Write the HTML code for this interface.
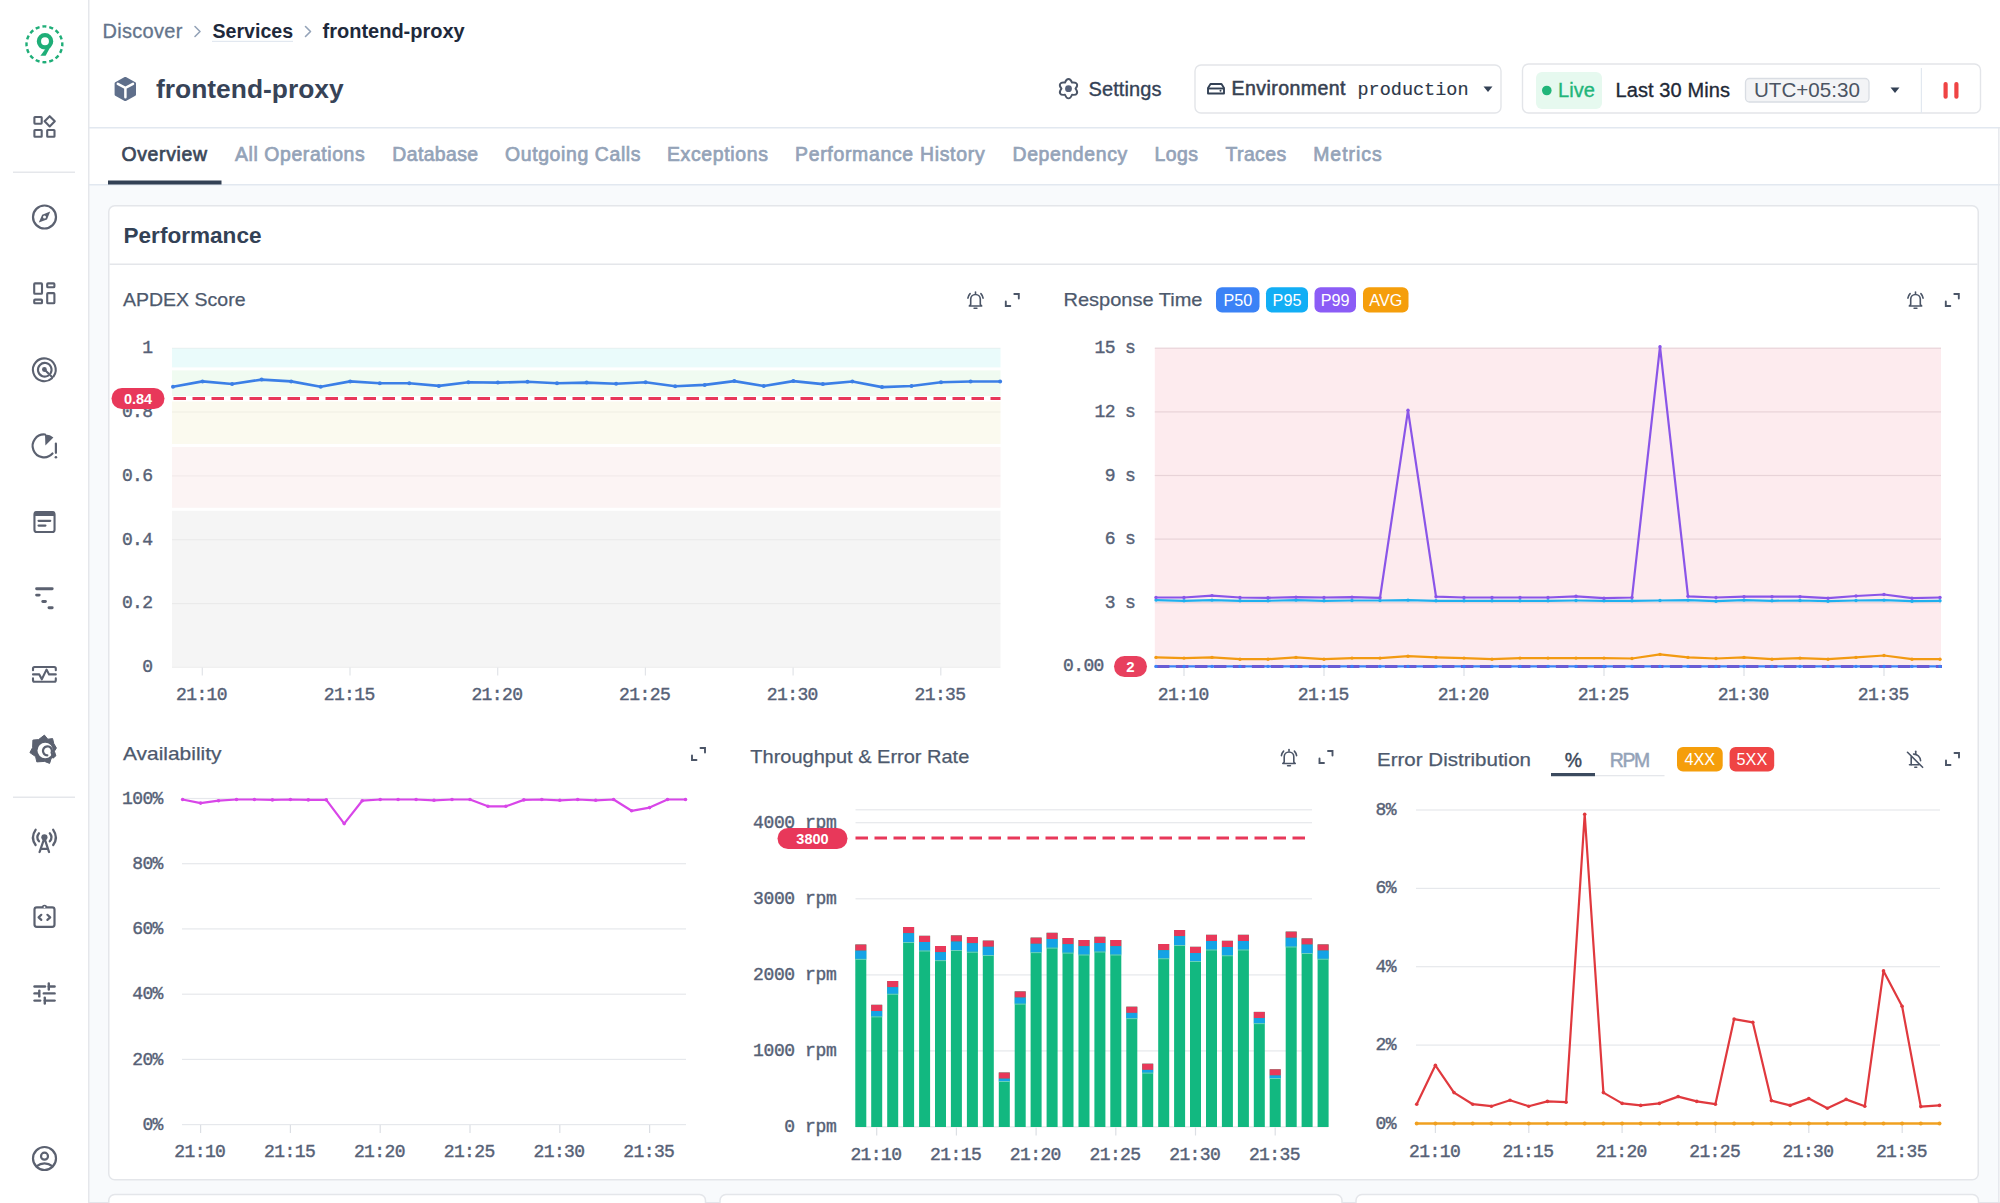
<!DOCTYPE html>
<html><head><meta charset="utf-8"><title>frontend-proxy</title>
<style>
html,body{margin:0;padding:0;width:2000px;height:1203px;overflow:hidden;background:#fff;font-family:"Liberation Sans",sans-serif;}
svg{position:absolute;left:0;top:0;display:block}
</style></head><body>
<svg width="2000" height="1203" viewBox="0 0 2000 1203">
<rect x="0" y="0" width="2000" height="1203" fill="#ffffff"/>
<rect x="89" y="185" width="1910" height="1018" fill="#f8fafc"/>
<rect x="88" y="0" width="1.5" height="1203" fill="#e5e7eb"/>
<rect x="89" y="127" width="1911" height="1.5" fill="#e2e8f0"/>
<rect x="89" y="184" width="1911" height="1.5" fill="#e2e8f0"/>
<rect x="1998.2" y="127" width="1.3" height="1076" fill="#e3e5ea"/>
<rect x="89" y="1202" width="1911" height="1" fill="#e3e5ea"/>
<rect x="13" y="171.5" width="62" height="1.5" fill="#e5e7eb"/>
<rect x="13" y="796.5" width="62" height="1.5" fill="#e5e7eb"/>
<circle cx="44.4" cy="44.3" r="17.9" fill="none" stroke="#1fae78" stroke-width="2.4" pathLength="16" stroke-dasharray="0.58 0.42" stroke-dashoffset="0.29"/>
<circle cx="45" cy="41.3" r="6.1" fill="none" stroke="#1fae78" stroke-width="4.3"/>
<path d="M49.4 43.5 L53.2 41.8 L45.6 55.7 L40.4 55.7 Z" fill="#1fae78"/>
<g fill="none" stroke="#5b6170" stroke-width="2.1" stroke-linejoin="round"><rect x="34.4" y="117" width="7.3" height="6.7" rx="0.6"/><rect x="34.4" y="130" width="7.3" height="6.8" rx="0.6"/><rect x="47.2" y="130" width="7.3" height="6.8" rx="0.6"/><path d="M49.7 116.2 L54.8 121.3 L49.7 126.4 L44.6 121.3 Z"/></g>
<circle cx="44.5" cy="217" r="11.5" fill="none" stroke="#5b6170" stroke-width="2.2"/>
<path d="M50.2 211.6 L47 219.5 L38.8 222.6 L42.2 214.8 Z" fill="#5b6170"/><circle cx="44.5" cy="217.1" r="1.5" fill="#fff"/>
<g fill="none" stroke="#5b6170" stroke-width="2.1" stroke-linejoin="round"><rect x="34.2" y="283.4" width="7.8" height="10.4" rx="0.8"/><rect x="47.2" y="283.4" width="7.2" height="3.9" rx="0.8"/><rect x="34.2" y="299.6" width="7.8" height="3.7" rx="0.8"/><rect x="47.2" y="293.1" width="7.2" height="10.2" rx="0.8"/></g>
<g fill="none" stroke="#5b6170" stroke-width="2.1" stroke-linecap="round"><path d="M52 378.2 A 11.4 11.4 0 1 1 53.6 376.4"/><path d="M48.2 375.6 A 6.8 6.8 0 1 1 50.6 373.2"/><path d="M44.4 369.5 L52.3 377.2"/></g><circle cx="44.4" cy="369.5" r="2.4" fill="#5b6170"/>
<g fill="none" stroke="#5b6170" stroke-width="2.2" stroke-linecap="round"><path d="M52.5 453.5 A 11.4 11.4 0 1 1 45 434.5"/><path d="M55.9 443.6 V452.8"/></g><path d="M45 434.4 A 11.4 11.4 0 0 1 53.4 437.4 L45.4 445.4 Z" fill="#5b6170"/><circle cx="55.9" cy="457.3" r="1.3" fill="#5b6170"/>
<rect x="34.45" y="512.15" width="20.1" height="19.8" rx="2.3" fill="none" stroke="#5b6170" stroke-width="2.1"/><rect x="34" y="511.6" width="21" height="4.4" rx="1.5" fill="#5b6170"/><path d="M38.6 520.8 H50.2 M38.6 525.6 H45.4" stroke="#5b6170" stroke-width="2.3" stroke-linecap="round"/>
<g stroke="#5b6170" stroke-width="2.9" stroke-linecap="round"><path d="M36.6 588.8 H52.2"/><path d="M36.6 595.1 H39.2"/><path d="M42.8 601.5 H45.4"/><path d="M49 607.7 H52.2"/></g>
<g fill="none" stroke="#5b6170" stroke-width="2.1" stroke-linecap="round" stroke-linejoin="round"><path d="M33 670.2 V668.5 Q33 667 34.5 667 H54.3 Q55.8 667 55.8 668.5 V670.2"/><path d="M33 678.4 V680.2 Q33 681.7 34.5 681.7 H54.3 Q55.8 681.7 55.8 680.2 V678.4"/><path d="M33 674.4 H39.3 L41.8 679.3 L46.5 669.6 L49.1 674.4 H55.8"/></g>
<path d="M44.4 735.1 L47.8 739.2 L52.6 738.6 L53.8 743.6 L56.4 748 L54.4 751.2 L55.9 755.9 L51.2 758.4 L49.6 763.4 L44.6 761.4 L36.8 761.9 L35.6 756.6 L29.9 752.6 L32.6 747.6 L32.9 740.1 L38.6 739.6 Z" fill="#5b6170" stroke="#5b6170" stroke-width="1" stroke-linejoin="round"/><circle cx="45.2" cy="750.5" r="7.7" fill="#fff"/><path d="M47.3 755.3 A 4.5 4.5 0 1 1 51.6 752.6 L53.4 757.2" fill="none" stroke="#5b6170" stroke-width="2.3" stroke-linecap="round" stroke-linejoin="round"/>
<g fill="none" stroke="#5b6170" stroke-width="2.3" stroke-linecap="round" stroke-linejoin="round"><path d="M35.6 829.8 Q30.2 837.5 35.6 845"/><path d="M53.2 829.8 Q58.6 837.5 53.2 845"/><path d="M39 833.3 Q35.6 837.4 39 841.3"/><path d="M49.8 833.3 Q53.2 837.4 49.8 841.3"/><path d="M39.6 852 L44.4 838 L49 852"/><path d="M41.1 848.8 H47.6"/></g><circle cx="44.4" cy="837.3" r="3.1" fill="#5b6170"/>
<g fill="none" stroke="#5b6170" stroke-width="2.2" stroke-linecap="round" stroke-linejoin="round"><rect x="34.5" y="907.3" width="20" height="19.6" rx="2.3"/><path d="M41.3 914.8 L38.6 917.4 L41.3 919.9"/><path d="M47.4 914.8 L50.2 917.4 L47.4 919.9"/></g><path d="M41.8 907.4 A 2.7 2.7 0 0 1 47.2 907.4 Z" fill="#5b6170"/><circle cx="44.5" cy="907.2" r="0.9" fill="#fff"/>
<g stroke="#5b6170" stroke-width="2.4" stroke-linecap="round"><path d="M34.5 986.5 H45"/><path d="M48.8 986.5 H54.6"/><path d="M48.8 983.4 V989.6"/><path d="M34.5 993.4 H38.8"/><path d="M43.8 993.4 H54.6"/><path d="M39.3 990.6 V996.4"/><path d="M34.5 1000.6 H40.2"/><path d="M44.8 1000.6 H54.6"/><path d="M44.8 997.6 V1003.6"/></g>
<g fill="none" stroke="#5b6170" stroke-width="2.2"><circle cx="44.5" cy="1158.5" r="11.5"/><circle cx="44.5" cy="1156.2" r="3.5"/><path d="M36.3 1166.4 Q44.5 1160.2 52.7 1166.4"/></g>
<text x="102.5" y="38" font-family="Liberation Sans" font-size="20" font-weight="400" fill="#64748b" stroke="#64748b" stroke-width="0.3" text-anchor="start" letter-spacing="0.3" >Discover</text>
<path d="M195 26.5 L200 31.5 L195 36.5" fill="none" stroke="#94a3b8" stroke-width="1.6" stroke-linecap="round" stroke-linejoin="round"/>
<text x="212.5" y="38" font-family="Liberation Sans" font-size="19.6" font-weight="700" fill="#1e293b" text-anchor="start" >Services</text>
<rect x="212" y="40.8" width="81" height="1.2" fill="#e2e8f0"/>
<path d="M305.5 26.5 L310.5 31.5 L305.5 36.5" fill="none" stroke="#94a3b8" stroke-width="1.6" stroke-linecap="round" stroke-linejoin="round"/>
<text x="322.5" y="38" font-family="Liberation Sans" font-size="20" font-weight="700" fill="#1e293b" text-anchor="start" >frontend-proxy</text>
<path d="M125.3 78.2 L134.7 83.4 L134.7 94.6 L125.3 99.8 L115.9 94.6 L115.9 83.4 Z" fill="#5f6f8b" stroke="#5f6f8b" stroke-width="2.6" stroke-linejoin="round"/><path d="M117.8 83.9 L125.4 87.9 L133 83.9 M125.4 87.9 V97.3" fill="none" stroke="#fff" stroke-width="2.5" stroke-linejoin="round" stroke-linecap="round"/>
<text x="156" y="97.5" font-family="Liberation Sans" font-size="26.4" font-weight="700" fill="#374357" text-anchor="start" >frontend-proxy</text>
<g transform="translate(1068.5 88.7)"><path d="M-3.50 -6.06 C-1.72 -10.86 1.72 -10.86 3.50 -6.06 C8.55 -6.92 10.27 -3.94 7.00 0.00 C10.27 3.94 8.55 6.92 3.50 6.06 C1.72 10.86 -1.72 10.86 -3.50 6.06 C-8.55 6.92 -10.27 3.94 -7.00 0.00 C-10.27 -3.94 -8.55 -6.92 -3.50 -6.06 Z" fill="none" stroke="#4b5567" stroke-width="1.9" stroke-linejoin="round"/><circle cx="0" cy="0" r="3.4" fill="#566179"/></g>
<text x="1088.5" y="95.5" font-family="Liberation Sans" font-size="20" font-weight="400" fill="#334155" stroke="#334155" stroke-width="0.35" text-anchor="start" letter-spacing="0.1" >Settings</text>
<rect x="1195" y="65" width="306" height="48" rx="6" fill="#fff" stroke="#e3e5e9" stroke-width="1.4"/>
<g fill="none" stroke="#334155" stroke-width="1.9" stroke-linejoin="round"><path d="M1208 93.5 V88 L1210.5 84 H1221.5 L1224 88 V93.5 Z"/><path d="M1208 88.5 H1224"/></g><circle cx="1220.5" cy="90.8" r="1" fill="#334155"/>
<text x="1231.5" y="94.8" font-family="Liberation Sans" font-size="19.5" fill="#374151" stroke="#374151" stroke-width="0.55" textLength="114" lengthAdjust="spacing">Environment</text>
<text x="1357.5" y="94.8" font-family="Liberation Mono" font-size="18.5" font-weight="400" fill="#2d3748" stroke="#2d3748" stroke-width="0.15" text-anchor="start" >production</text>
<path d="M1483.5 86.5 H1492.5 L1488 92 Z" fill="#334155"/>
<rect x="1522.5" y="64" width="458" height="49" rx="6" fill="#fff" stroke="#e3e5e9" stroke-width="1.4"/>
<rect x="1536" y="72" width="66" height="37" rx="6" fill="#e6f9ef"/>
<circle cx="1546.8" cy="90.5" r="4.8" fill="#21b57a"/>
<text x="1558" y="97" font-family="Liberation Sans" font-size="20" font-weight="400" fill="#21b57a" stroke="#21b57a" stroke-width="0.35" text-anchor="start" letter-spacing="0.1" >Live</text>
<text x="1615.5" y="97" font-family="Liberation Sans" font-size="20" font-weight="400" fill="#1f2937" stroke="#1f2937" stroke-width="0.35" text-anchor="start" letter-spacing="0.1" >Last 30 Mins</text>
<rect x="1745.5" y="78.5" width="123.5" height="23.5" rx="4" fill="#f3f4f6" stroke="#d9dde3" stroke-width="1.3"/>
<text x="1754" y="97" font-family="Liberation Sans" font-size="20.6" font-weight="400" fill="#4b5563" text-anchor="start" >UTC+05:30</text>
<path d="M1890.5 87.5 H1899.5 L1895 93 Z" fill="#334155"/>
<rect x="1920.8" y="68" width="1.2" height="45" fill="#e2e8f0"/>
<rect x="1943.5" y="82" width="4.2" height="16.8" rx="2" fill="#ef4444"/><rect x="1954.3" y="82" width="4.2" height="16.8" rx="2" fill="#ef4444"/>
<text x="121.5" y="160.7" font-family="Liberation Sans" font-size="19.4" font-weight="400" fill="#3b4859" stroke="#3b4859" stroke-width="0.7" textLength="85.4" lengthAdjust="spacing">Overview</text>
<text x="235" y="160.7" font-family="Liberation Sans" font-size="19.4" font-weight="400" fill="#94a3b8" stroke="#94a3b8" stroke-width="0.7" textLength="129.7" lengthAdjust="spacing">All Operations</text>
<text x="392.3" y="160.7" font-family="Liberation Sans" font-size="19.4" font-weight="400" fill="#94a3b8" stroke="#94a3b8" stroke-width="0.7" textLength="85.8" lengthAdjust="spacing">Database</text>
<text x="505" y="160.7" font-family="Liberation Sans" font-size="19.4" font-weight="400" fill="#94a3b8" stroke="#94a3b8" stroke-width="0.7" textLength="135.5" lengthAdjust="spacing">Outgoing Calls</text>
<text x="667" y="160.7" font-family="Liberation Sans" font-size="19.4" font-weight="400" fill="#94a3b8" stroke="#94a3b8" stroke-width="0.7" textLength="100.9" lengthAdjust="spacing">Exceptions</text>
<text x="795" y="160.7" font-family="Liberation Sans" font-size="19.4" font-weight="400" fill="#94a3b8" stroke="#94a3b8" stroke-width="0.7" textLength="189.6" lengthAdjust="spacing">Performance History</text>
<text x="1012.5" y="160.7" font-family="Liberation Sans" font-size="19.4" font-weight="400" fill="#94a3b8" stroke="#94a3b8" stroke-width="0.7" textLength="114.7" lengthAdjust="spacing">Dependency</text>
<text x="1154.5" y="160.7" font-family="Liberation Sans" font-size="19.4" font-weight="400" fill="#94a3b8" stroke="#94a3b8" stroke-width="0.7" textLength="43.4" lengthAdjust="spacing">Logs</text>
<text x="1225.4" y="160.7" font-family="Liberation Sans" font-size="19.4" font-weight="400" fill="#94a3b8" stroke="#94a3b8" stroke-width="0.7" textLength="60.8" lengthAdjust="spacing">Traces</text>
<text x="1313.2" y="160.7" font-family="Liberation Sans" font-size="19.4" font-weight="400" fill="#94a3b8" stroke="#94a3b8" stroke-width="0.7" textLength="68.5" lengthAdjust="spacing">Metrics</text>
<rect x="108" y="180.5" width="113.5" height="4" fill="#334155"/>
<rect x="108.75" y="205.75" width="1869.5" height="974" rx="6" fill="#ffffff" stroke="#e4e6ea" stroke-width="1.5"/>
<rect x="109.5" y="263.5" width="1868" height="1.5" fill="#e4e6ea"/>
<text x="123.5" y="243" font-family="Liberation Sans" font-size="22.4" font-weight="700" fill="#334155" textLength="138" lengthAdjust="spacingAndGlyphs">Performance</text>
<rect x="108.75" y="1194.5" width="596.75" height="40" rx="6" fill="#ffffff" stroke="#e4e6ea" stroke-width="1.5"/>
<rect x="720" y="1194.5" width="622" height="40" rx="6" fill="#ffffff" stroke="#e4e6ea" stroke-width="1.5"/>
<rect x="1356" y="1194.5" width="622.5" height="40" rx="6" fill="#ffffff" stroke="#e4e6ea" stroke-width="1.5"/>
<text x="123" y="306.3" font-family="Liberation Sans" font-size="19" font-weight="400" fill="#4d596d" stroke="#4d596d" stroke-width="0.25" textLength="122.5" lengthAdjust="spacingAndGlyphs">APDEX Score</text>
<g transform="translate(966.5 291)" fill="none" stroke="#4b5567" stroke-width="1.6" stroke-linecap="round" stroke-linejoin="round"><path d="M4.2 13.5 V8.3 A4.8 4.8 0 0 1 13.8 8.3 V13.5 L15.2 15 H2.8 Z"/><path d="M9 1 V2.6"/><path d="M7.6 17.2 H10.4"/><path d="M1.4 7.2 A8 8 0 0 1 3.6 2.6"/><path d="M16.6 7.2 A8 8 0 0 0 14.4 2.6"/></g>
<g transform="translate(1004.8 293)" fill="none" stroke="#4b5567" stroke-width="1.9" stroke-linecap="round"><path d="M9.5 1 H14 V5.5"/><path d="M1 8.5 V13 H5.5"/></g>
<rect x="172" y="348.2" width="828.5" height="19.2" fill="#eafbfb"/>
<rect x="172" y="370.4" width="828.5" height="25.7" fill="#f0fbf1"/>
<rect x="172" y="401.5" width="828.5" height="42.5" fill="#fbfaef"/>
<rect x="172" y="447.0" width="828.5" height="60.8" fill="#fcf4f4"/>
<rect x="172" y="510.8" width="828.5" height="156.6" fill="#f5f5f5"/>
<rect x="172" y="347.6" width="828.5" height="1.2" fill="#000" fill-opacity="0.045"/>
<rect x="172" y="411.4" width="828.5" height="1.2" fill="#000" fill-opacity="0.045"/>
<rect x="172" y="475.3" width="828.5" height="1.2" fill="#000" fill-opacity="0.045"/>
<rect x="172" y="539.1" width="828.5" height="1.2" fill="#000" fill-opacity="0.045"/>
<rect x="172" y="603.0" width="828.5" height="1.2" fill="#000" fill-opacity="0.045"/>
<rect x="172" y="666.8" width="828.5" height="1.2" fill="#000" fill-opacity="0.045"/>
<text x="152.5" y="353.0" font-family="Liberation Mono" font-size="18" font-weight="400" fill="#566176" stroke="#566176" stroke-width="0.4" text-anchor="end" letter-spacing="-0.6" >1</text>
<text x="152.5" y="416.8" font-family="Liberation Mono" font-size="18" font-weight="400" fill="#566176" stroke="#566176" stroke-width="0.4" text-anchor="end" letter-spacing="-0.6" >0.8</text>
<text x="152.5" y="480.7" font-family="Liberation Mono" font-size="18" font-weight="400" fill="#566176" stroke="#566176" stroke-width="0.4" text-anchor="end" letter-spacing="-0.6" >0.6</text>
<text x="152.5" y="544.5" font-family="Liberation Mono" font-size="18" font-weight="400" fill="#566176" stroke="#566176" stroke-width="0.4" text-anchor="end" letter-spacing="-0.6" >0.4</text>
<text x="152.5" y="608.4" font-family="Liberation Mono" font-size="18" font-weight="400" fill="#566176" stroke="#566176" stroke-width="0.4" text-anchor="end" letter-spacing="-0.6" >0.2</text>
<text x="152.5" y="672.2" font-family="Liberation Mono" font-size="18" font-weight="400" fill="#566176" stroke="#566176" stroke-width="0.4" text-anchor="end" letter-spacing="-0.6" >0</text>
<rect x="201.7" y="667.5" width="1.2" height="8" fill="#e2e4e8"/>
<text x="201.5" y="700.3" font-family="Liberation Mono" font-size="18" font-weight="400" fill="#566176" stroke="#566176" stroke-width="0.4" text-anchor="middle" letter-spacing="-0.6" >21:10</text>
<rect x="349.4" y="667.5" width="1.2" height="8" fill="#e2e4e8"/>
<text x="349.2" y="700.3" font-family="Liberation Mono" font-size="18" font-weight="400" fill="#566176" stroke="#566176" stroke-width="0.4" text-anchor="middle" letter-spacing="-0.6" >21:15</text>
<rect x="497.1" y="667.5" width="1.2" height="8" fill="#e2e4e8"/>
<text x="496.9" y="700.3" font-family="Liberation Mono" font-size="18" font-weight="400" fill="#566176" stroke="#566176" stroke-width="0.4" text-anchor="middle" letter-spacing="-0.6" >21:20</text>
<rect x="644.8" y="667.5" width="1.2" height="8" fill="#e2e4e8"/>
<text x="644.6" y="700.3" font-family="Liberation Mono" font-size="18" font-weight="400" fill="#566176" stroke="#566176" stroke-width="0.4" text-anchor="middle" letter-spacing="-0.6" >21:25</text>
<rect x="792.5" y="667.5" width="1.2" height="8" fill="#e2e4e8"/>
<text x="792.3" y="700.3" font-family="Liberation Mono" font-size="18" font-weight="400" fill="#566176" stroke="#566176" stroke-width="0.4" text-anchor="middle" letter-spacing="-0.6" >21:30</text>
<rect x="940.2" y="667.5" width="1.2" height="8" fill="#e2e4e8"/>
<text x="940.0" y="700.3" font-family="Liberation Mono" font-size="18" font-weight="400" fill="#566176" stroke="#566176" stroke-width="0.4" text-anchor="middle" letter-spacing="-0.6" >21:35</text>
<polyline points="173.0,386.7 202.5,381.4 232.1,384.0 261.6,379.6 291.2,381.4 320.7,386.7 350.2,381.4 379.8,383.3 409.3,383.3 438.9,385.9 468.4,382.2 497.9,382.6 527.5,381.8 557.0,383.3 586.6,382.6 616.1,383.7 645.6,382.2 675.2,386.3 704.7,384.9 734.3,381.1 763.8,386.0 793.3,381.1 822.9,384.1 852.4,381.5 882.0,387.1 911.5,386.0 941.0,382.2 970.6,381.5 1000.1,381.5" fill="none" stroke="#3b7fe6" stroke-width="2.6" stroke-linejoin="round"/>
<circle cx="173.0" cy="386.7" r="2" fill="#3b7fe6"/>
<circle cx="202.5" cy="381.4" r="2" fill="#3b7fe6"/>
<circle cx="232.1" cy="384.0" r="2" fill="#3b7fe6"/>
<circle cx="261.6" cy="379.6" r="2" fill="#3b7fe6"/>
<circle cx="291.2" cy="381.4" r="2" fill="#3b7fe6"/>
<circle cx="320.7" cy="386.7" r="2" fill="#3b7fe6"/>
<circle cx="350.2" cy="381.4" r="2" fill="#3b7fe6"/>
<circle cx="379.8" cy="383.3" r="2" fill="#3b7fe6"/>
<circle cx="409.3" cy="383.3" r="2" fill="#3b7fe6"/>
<circle cx="438.9" cy="385.9" r="2" fill="#3b7fe6"/>
<circle cx="468.4" cy="382.2" r="2" fill="#3b7fe6"/>
<circle cx="497.9" cy="382.6" r="2" fill="#3b7fe6"/>
<circle cx="527.5" cy="381.8" r="2" fill="#3b7fe6"/>
<circle cx="557.0" cy="383.3" r="2" fill="#3b7fe6"/>
<circle cx="586.6" cy="382.6" r="2" fill="#3b7fe6"/>
<circle cx="616.1" cy="383.7" r="2" fill="#3b7fe6"/>
<circle cx="645.6" cy="382.2" r="2" fill="#3b7fe6"/>
<circle cx="675.2" cy="386.3" r="2" fill="#3b7fe6"/>
<circle cx="704.7" cy="384.9" r="2" fill="#3b7fe6"/>
<circle cx="734.3" cy="381.1" r="2" fill="#3b7fe6"/>
<circle cx="763.8" cy="386.0" r="2" fill="#3b7fe6"/>
<circle cx="793.3" cy="381.1" r="2" fill="#3b7fe6"/>
<circle cx="822.9" cy="384.1" r="2" fill="#3b7fe6"/>
<circle cx="852.4" cy="381.5" r="2" fill="#3b7fe6"/>
<circle cx="882.0" cy="387.1" r="2" fill="#3b7fe6"/>
<circle cx="911.5" cy="386.0" r="2" fill="#3b7fe6"/>
<circle cx="941.0" cy="382.2" r="2" fill="#3b7fe6"/>
<circle cx="970.6" cy="381.5" r="2" fill="#3b7fe6"/>
<circle cx="1000.1" cy="381.5" r="2" fill="#3b7fe6"/>
<line x1="172" y1="398.4" x2="1000.5" y2="398.4" stroke="#e8385a" stroke-width="3" stroke-dasharray="12.5 6.5" stroke-dashoffset="-1.5"/>
<rect x="111.5" y="388" width="53" height="21" rx="10.5" fill="#e8385a"/>
<text x="138" y="403.5" font-family="Liberation Sans" font-size="14.5" font-weight="700" fill="#ffffff" text-anchor="middle" >0.84</text>
<text x="1063.5" y="306" font-family="Liberation Sans" font-size="19" font-weight="400" fill="#4d596d" stroke="#4d596d" stroke-width="0.25" textLength="139" lengthAdjust="spacingAndGlyphs">Response Time</text>
<rect x="1216" y="287.3" width="43.5" height="25.2" rx="6" fill="#3b82f6"/>
<text x="1237.8" y="305.8" font-family="Liberation Sans" font-size="16.2" fill="#fff" text-anchor="middle">P50</text>
<rect x="1266" y="287.3" width="42" height="25.2" rx="6" fill="#12aef5"/>
<text x="1287.0" y="305.8" font-family="Liberation Sans" font-size="16.2" fill="#fff" text-anchor="middle">P95</text>
<rect x="1314.5" y="287.3" width="41.5" height="25.2" rx="6" fill="#8b5cf6"/>
<text x="1335.2" y="305.8" font-family="Liberation Sans" font-size="16.2" fill="#fff" text-anchor="middle">P99</text>
<rect x="1363" y="287.3" width="45.5" height="25.2" rx="6" fill="#f59e0b"/>
<text x="1385.8" y="305.8" font-family="Liberation Sans" font-size="16.2" fill="#fff" text-anchor="middle">AVG</text>
<g transform="translate(1906.5 291)" fill="none" stroke="#4b5567" stroke-width="1.6" stroke-linecap="round" stroke-linejoin="round"><path d="M4.2 13.5 V8.3 A4.8 4.8 0 0 1 13.8 8.3 V13.5 L15.2 15 H2.8 Z"/><path d="M9 1 V2.6"/><path d="M7.6 17.2 H10.4"/><path d="M1.4 7.2 A8 8 0 0 1 3.6 2.6"/><path d="M16.6 7.2 A8 8 0 0 0 14.4 2.6"/></g>
<g transform="translate(1944.8 293)" fill="none" stroke="#4b5567" stroke-width="1.9" stroke-linecap="round"><path d="M9.5 1 H14 V5.5"/><path d="M1 8.5 V13 H5.5"/></g>
<rect x="1154.8" y="348.2" width="786.2" height="318.2" fill="#fdebee"/>
<rect x="1154.8" y="347.6" width="786.2" height="1.2" fill="#e8d3d8"/>
<rect x="1154.8" y="411.3" width="786.2" height="1.2" fill="#e8d3d8"/>
<rect x="1154.8" y="474.9" width="786.2" height="1.2" fill="#e8d3d8"/>
<rect x="1154.8" y="538.5" width="786.2" height="1.2" fill="#e8d3d8"/>
<rect x="1154.8" y="602.2" width="786.2" height="1.2" fill="#e8d3d8"/>
<text x="1135.3" y="353.2" font-family="Liberation Mono" font-size="18" font-weight="400" fill="#566176" stroke="#566176" stroke-width="0.4" text-anchor="end" letter-spacing="-0.6" >15 s</text>
<text x="1135.3" y="416.9" font-family="Liberation Mono" font-size="18" font-weight="400" fill="#566176" stroke="#566176" stroke-width="0.4" text-anchor="end" letter-spacing="-0.6" >12 s</text>
<text x="1135.3" y="480.5" font-family="Liberation Mono" font-size="18" font-weight="400" fill="#566176" stroke="#566176" stroke-width="0.4" text-anchor="end" letter-spacing="-0.6" >9 s</text>
<text x="1135.3" y="544.1" font-family="Liberation Mono" font-size="18" font-weight="400" fill="#566176" stroke="#566176" stroke-width="0.4" text-anchor="end" letter-spacing="-0.6" >6 s</text>
<text x="1135.3" y="607.8" font-family="Liberation Mono" font-size="18" font-weight="400" fill="#566176" stroke="#566176" stroke-width="0.4" text-anchor="end" letter-spacing="-0.6" >3 s</text>
<text x="1103.8" y="671.4" font-family="Liberation Mono" font-size="18" font-weight="400" fill="#566176" stroke="#566176" stroke-width="0.4" text-anchor="end" letter-spacing="-0.6" >0.00</text>
<rect x="1183.4" y="667" width="1.2" height="9" fill="#dcdfe4"/>
<text x="1183.2" y="700" font-family="Liberation Mono" font-size="18" font-weight="400" fill="#566176" stroke="#566176" stroke-width="0.4" text-anchor="middle" letter-spacing="-0.6" >21:10</text>
<rect x="1323.4" y="667" width="1.2" height="9" fill="#dcdfe4"/>
<text x="1323.2" y="700" font-family="Liberation Mono" font-size="18" font-weight="400" fill="#566176" stroke="#566176" stroke-width="0.4" text-anchor="middle" letter-spacing="-0.6" >21:15</text>
<rect x="1463.4" y="667" width="1.2" height="9" fill="#dcdfe4"/>
<text x="1463.2" y="700" font-family="Liberation Mono" font-size="18" font-weight="400" fill="#566176" stroke="#566176" stroke-width="0.4" text-anchor="middle" letter-spacing="-0.6" >21:20</text>
<rect x="1603.4" y="667" width="1.2" height="9" fill="#dcdfe4"/>
<text x="1603.2" y="700" font-family="Liberation Mono" font-size="18" font-weight="400" fill="#566176" stroke="#566176" stroke-width="0.4" text-anchor="middle" letter-spacing="-0.6" >21:25</text>
<rect x="1743.4" y="667" width="1.2" height="9" fill="#dcdfe4"/>
<text x="1743.2" y="700" font-family="Liberation Mono" font-size="18" font-weight="400" fill="#566176" stroke="#566176" stroke-width="0.4" text-anchor="middle" letter-spacing="-0.6" >21:30</text>
<rect x="1883.4" y="667" width="1.2" height="9" fill="#dcdfe4"/>
<text x="1883.2" y="700" font-family="Liberation Mono" font-size="18" font-weight="400" fill="#566176" stroke="#566176" stroke-width="0.4" text-anchor="middle" letter-spacing="-0.6" >21:35</text>
<polyline points="1156.0,657.4 1184.0,658.1 1212.0,657.4 1240.0,659.2 1268.0,659.2 1296.0,657.4 1324.0,659.2 1352.0,658.1 1380.0,658.1 1408.0,656.2 1436.0,657.4 1464.0,658.1 1492.0,659.2 1520.0,658.1 1548.0,658.1 1576.0,658.1 1604.0,658.1 1632.0,658.5 1660.0,654.4 1688.0,657.4 1716.0,658.5 1744.0,657.4 1772.0,659.2 1800.0,658.1 1828.0,659.2 1856.0,657.4 1884.0,655.5 1912.0,659.2 1940.0,659.2" fill="none" stroke="#f29a12" stroke-width="2.2" stroke-linejoin="round"/>
<circle cx="1156.0" cy="657.4" r="1.7" fill="#f29a12"/>
<circle cx="1184.0" cy="658.1" r="1.7" fill="#f29a12"/>
<circle cx="1212.0" cy="657.4" r="1.7" fill="#f29a12"/>
<circle cx="1240.0" cy="659.2" r="1.7" fill="#f29a12"/>
<circle cx="1268.0" cy="659.2" r="1.7" fill="#f29a12"/>
<circle cx="1296.0" cy="657.4" r="1.7" fill="#f29a12"/>
<circle cx="1324.0" cy="659.2" r="1.7" fill="#f29a12"/>
<circle cx="1352.0" cy="658.1" r="1.7" fill="#f29a12"/>
<circle cx="1380.0" cy="658.1" r="1.7" fill="#f29a12"/>
<circle cx="1408.0" cy="656.2" r="1.7" fill="#f29a12"/>
<circle cx="1436.0" cy="657.4" r="1.7" fill="#f29a12"/>
<circle cx="1464.0" cy="658.1" r="1.7" fill="#f29a12"/>
<circle cx="1492.0" cy="659.2" r="1.7" fill="#f29a12"/>
<circle cx="1520.0" cy="658.1" r="1.7" fill="#f29a12"/>
<circle cx="1548.0" cy="658.1" r="1.7" fill="#f29a12"/>
<circle cx="1576.0" cy="658.1" r="1.7" fill="#f29a12"/>
<circle cx="1604.0" cy="658.1" r="1.7" fill="#f29a12"/>
<circle cx="1632.0" cy="658.5" r="1.7" fill="#f29a12"/>
<circle cx="1660.0" cy="654.4" r="1.7" fill="#f29a12"/>
<circle cx="1688.0" cy="657.4" r="1.7" fill="#f29a12"/>
<circle cx="1716.0" cy="658.5" r="1.7" fill="#f29a12"/>
<circle cx="1744.0" cy="657.4" r="1.7" fill="#f29a12"/>
<circle cx="1772.0" cy="659.2" r="1.7" fill="#f29a12"/>
<circle cx="1800.0" cy="658.1" r="1.7" fill="#f29a12"/>
<circle cx="1828.0" cy="659.2" r="1.7" fill="#f29a12"/>
<circle cx="1856.0" cy="657.4" r="1.7" fill="#f29a12"/>
<circle cx="1884.0" cy="655.5" r="1.7" fill="#f29a12"/>
<circle cx="1912.0" cy="659.2" r="1.7" fill="#f29a12"/>
<circle cx="1940.0" cy="659.2" r="1.7" fill="#f29a12"/>
<polyline points="1156.0,600.1 1184.0,600.8 1212.0,600.1 1240.0,600.8 1268.0,600.8 1296.0,600.1 1324.0,600.8 1352.0,600.5 1380.0,600.5 1408.0,600.1 1436.0,600.8 1464.0,600.8 1492.0,600.8 1520.0,600.8 1548.0,600.8 1576.0,600.5 1604.0,600.8 1632.0,600.8 1660.0,600.5 1688.0,600.1 1716.0,601.2 1744.0,600.1 1772.0,600.8 1800.0,600.5 1828.0,601.2 1856.0,600.5 1884.0,600.1 1912.0,601.2 1940.0,600.8" fill="none" stroke="#1eb0ee" stroke-width="2.2" stroke-linejoin="round"/>
<circle cx="1156.0" cy="600.1" r="1.7" fill="#1eb0ee"/>
<circle cx="1184.0" cy="600.8" r="1.7" fill="#1eb0ee"/>
<circle cx="1212.0" cy="600.1" r="1.7" fill="#1eb0ee"/>
<circle cx="1240.0" cy="600.8" r="1.7" fill="#1eb0ee"/>
<circle cx="1268.0" cy="600.8" r="1.7" fill="#1eb0ee"/>
<circle cx="1296.0" cy="600.1" r="1.7" fill="#1eb0ee"/>
<circle cx="1324.0" cy="600.8" r="1.7" fill="#1eb0ee"/>
<circle cx="1352.0" cy="600.5" r="1.7" fill="#1eb0ee"/>
<circle cx="1380.0" cy="600.5" r="1.7" fill="#1eb0ee"/>
<circle cx="1408.0" cy="600.1" r="1.7" fill="#1eb0ee"/>
<circle cx="1436.0" cy="600.8" r="1.7" fill="#1eb0ee"/>
<circle cx="1464.0" cy="600.8" r="1.7" fill="#1eb0ee"/>
<circle cx="1492.0" cy="600.8" r="1.7" fill="#1eb0ee"/>
<circle cx="1520.0" cy="600.8" r="1.7" fill="#1eb0ee"/>
<circle cx="1548.0" cy="600.8" r="1.7" fill="#1eb0ee"/>
<circle cx="1576.0" cy="600.5" r="1.7" fill="#1eb0ee"/>
<circle cx="1604.0" cy="600.8" r="1.7" fill="#1eb0ee"/>
<circle cx="1632.0" cy="600.8" r="1.7" fill="#1eb0ee"/>
<circle cx="1660.0" cy="600.5" r="1.7" fill="#1eb0ee"/>
<circle cx="1688.0" cy="600.1" r="1.7" fill="#1eb0ee"/>
<circle cx="1716.0" cy="601.2" r="1.7" fill="#1eb0ee"/>
<circle cx="1744.0" cy="600.1" r="1.7" fill="#1eb0ee"/>
<circle cx="1772.0" cy="600.8" r="1.7" fill="#1eb0ee"/>
<circle cx="1800.0" cy="600.5" r="1.7" fill="#1eb0ee"/>
<circle cx="1828.0" cy="601.2" r="1.7" fill="#1eb0ee"/>
<circle cx="1856.0" cy="600.5" r="1.7" fill="#1eb0ee"/>
<circle cx="1884.0" cy="600.1" r="1.7" fill="#1eb0ee"/>
<circle cx="1912.0" cy="601.2" r="1.7" fill="#1eb0ee"/>
<circle cx="1940.0" cy="600.8" r="1.7" fill="#1eb0ee"/>
<polyline points="1156.0,597.5 1184.0,597.5 1212.0,595.6 1240.0,597.5 1268.0,597.8 1296.0,597.1 1324.0,597.5 1352.0,597.1 1380.0,597.8 1408.0,410.3 1436.0,596.7 1464.0,597.5 1492.0,597.5 1520.0,597.5 1548.0,597.5 1576.0,596.3 1604.0,598.2 1632.0,597.5 1660.0,346.7 1688.0,596.3 1716.0,597.5 1744.0,596.7 1772.0,596.7 1800.0,596.7 1828.0,598.2 1856.0,596.0 1884.0,594.5 1912.0,598.2 1940.0,597.5" fill="none" stroke="#8a55e8" stroke-width="2.2" stroke-linejoin="round"/>
<circle cx="1156.0" cy="597.5" r="1.7" fill="#8a55e8"/>
<circle cx="1184.0" cy="597.5" r="1.7" fill="#8a55e8"/>
<circle cx="1212.0" cy="595.6" r="1.7" fill="#8a55e8"/>
<circle cx="1240.0" cy="597.5" r="1.7" fill="#8a55e8"/>
<circle cx="1268.0" cy="597.8" r="1.7" fill="#8a55e8"/>
<circle cx="1296.0" cy="597.1" r="1.7" fill="#8a55e8"/>
<circle cx="1324.0" cy="597.5" r="1.7" fill="#8a55e8"/>
<circle cx="1352.0" cy="597.1" r="1.7" fill="#8a55e8"/>
<circle cx="1380.0" cy="597.8" r="1.7" fill="#8a55e8"/>
<circle cx="1408.0" cy="410.3" r="1.7" fill="#8a55e8"/>
<circle cx="1436.0" cy="596.7" r="1.7" fill="#8a55e8"/>
<circle cx="1464.0" cy="597.5" r="1.7" fill="#8a55e8"/>
<circle cx="1492.0" cy="597.5" r="1.7" fill="#8a55e8"/>
<circle cx="1520.0" cy="597.5" r="1.7" fill="#8a55e8"/>
<circle cx="1548.0" cy="597.5" r="1.7" fill="#8a55e8"/>
<circle cx="1576.0" cy="596.3" r="1.7" fill="#8a55e8"/>
<circle cx="1604.0" cy="598.2" r="1.7" fill="#8a55e8"/>
<circle cx="1632.0" cy="597.5" r="1.7" fill="#8a55e8"/>
<circle cx="1660.0" cy="346.7" r="1.7" fill="#8a55e8"/>
<circle cx="1688.0" cy="596.3" r="1.7" fill="#8a55e8"/>
<circle cx="1716.0" cy="597.5" r="1.7" fill="#8a55e8"/>
<circle cx="1744.0" cy="596.7" r="1.7" fill="#8a55e8"/>
<circle cx="1772.0" cy="596.7" r="1.7" fill="#8a55e8"/>
<circle cx="1800.0" cy="596.7" r="1.7" fill="#8a55e8"/>
<circle cx="1828.0" cy="598.2" r="1.7" fill="#8a55e8"/>
<circle cx="1856.0" cy="596.0" r="1.7" fill="#8a55e8"/>
<circle cx="1884.0" cy="594.5" r="1.7" fill="#8a55e8"/>
<circle cx="1912.0" cy="598.2" r="1.7" fill="#8a55e8"/>
<circle cx="1940.0" cy="597.5" r="1.7" fill="#8a55e8"/>
<line x1="1154.8" y1="666.4" x2="1942" y2="666.4" stroke="#3b82f6" stroke-width="2.2"/>
<line x1="1156.8999999999999" y1="666.4" x2="1942" y2="666.4" stroke="#6a5cd4" stroke-width="3" stroke-dasharray="12.5 6.5"/>
<circle cx="1156.0" cy="666.4" r="1.7" fill="#3b82f6"/>
<circle cx="1184.0" cy="666.4" r="1.7" fill="#3b82f6"/>
<circle cx="1212.0" cy="666.4" r="1.7" fill="#3b82f6"/>
<circle cx="1240.0" cy="666.4" r="1.7" fill="#3b82f6"/>
<circle cx="1268.0" cy="666.4" r="1.7" fill="#3b82f6"/>
<circle cx="1296.0" cy="666.4" r="1.7" fill="#3b82f6"/>
<circle cx="1324.0" cy="666.4" r="1.7" fill="#3b82f6"/>
<circle cx="1352.0" cy="666.4" r="1.7" fill="#3b82f6"/>
<circle cx="1380.0" cy="666.4" r="1.7" fill="#3b82f6"/>
<circle cx="1408.0" cy="666.4" r="1.7" fill="#3b82f6"/>
<circle cx="1436.0" cy="666.4" r="1.7" fill="#3b82f6"/>
<circle cx="1464.0" cy="666.4" r="1.7" fill="#3b82f6"/>
<circle cx="1492.0" cy="666.4" r="1.7" fill="#3b82f6"/>
<circle cx="1520.0" cy="666.4" r="1.7" fill="#3b82f6"/>
<circle cx="1548.0" cy="666.4" r="1.7" fill="#3b82f6"/>
<circle cx="1576.0" cy="666.4" r="1.7" fill="#3b82f6"/>
<circle cx="1604.0" cy="666.4" r="1.7" fill="#3b82f6"/>
<circle cx="1632.0" cy="666.4" r="1.7" fill="#3b82f6"/>
<circle cx="1660.0" cy="666.4" r="1.7" fill="#3b82f6"/>
<circle cx="1688.0" cy="666.4" r="1.7" fill="#3b82f6"/>
<circle cx="1716.0" cy="666.4" r="1.7" fill="#3b82f6"/>
<circle cx="1744.0" cy="666.4" r="1.7" fill="#3b82f6"/>
<circle cx="1772.0" cy="666.4" r="1.7" fill="#3b82f6"/>
<circle cx="1800.0" cy="666.4" r="1.7" fill="#3b82f6"/>
<circle cx="1828.0" cy="666.4" r="1.7" fill="#3b82f6"/>
<circle cx="1856.0" cy="666.4" r="1.7" fill="#3b82f6"/>
<circle cx="1884.0" cy="666.4" r="1.7" fill="#3b82f6"/>
<circle cx="1912.0" cy="666.4" r="1.7" fill="#3b82f6"/>
<circle cx="1940.0" cy="666.4" r="1.7" fill="#3b82f6"/>
<rect x="1114" y="656" width="33" height="21" rx="10.5" fill="#e8405e"/>
<text x="1130.5" y="672" font-family="Liberation Sans" font-size="15" font-weight="700" fill="#ffffff" text-anchor="middle" >2</text>
<text x="123" y="760.4" font-family="Liberation Sans" font-size="19" font-weight="400" fill="#4d596d" stroke="#4d596d" stroke-width="0.25" textLength="98.5" lengthAdjust="spacingAndGlyphs">Availability</text>
<g transform="translate(691 747)" fill="none" stroke="#4b5567" stroke-width="1.9" stroke-linecap="round"><path d="M9.5 1 H14 V5.5"/><path d="M1 8.5 V13 H5.5"/></g>
<rect x="182" y="797.9" width="504" height="1.2" fill="#e6e8ec"/>
<text x="162.8" y="803.7" font-family="Liberation Mono" font-size="18" font-weight="400" fill="#566176" stroke="#566176" stroke-width="0.4" text-anchor="end" letter-spacing="-0.6" >100%</text>
<rect x="182" y="863.1" width="504" height="1.2" fill="#e6e8ec"/>
<text x="162.8" y="868.9" font-family="Liberation Mono" font-size="18" font-weight="400" fill="#566176" stroke="#566176" stroke-width="0.4" text-anchor="end" letter-spacing="-0.6" >80%</text>
<rect x="182" y="928.3" width="504" height="1.2" fill="#e6e8ec"/>
<text x="162.8" y="934.1" font-family="Liberation Mono" font-size="18" font-weight="400" fill="#566176" stroke="#566176" stroke-width="0.4" text-anchor="end" letter-spacing="-0.6" >60%</text>
<rect x="182" y="993.6" width="504" height="1.2" fill="#e6e8ec"/>
<text x="162.8" y="999.4" font-family="Liberation Mono" font-size="18" font-weight="400" fill="#566176" stroke="#566176" stroke-width="0.4" text-anchor="end" letter-spacing="-0.6" >40%</text>
<rect x="182" y="1058.8" width="504" height="1.2" fill="#e6e8ec"/>
<text x="162.8" y="1064.6" font-family="Liberation Mono" font-size="18" font-weight="400" fill="#566176" stroke="#566176" stroke-width="0.4" text-anchor="end" letter-spacing="-0.6" >20%</text>
<rect x="182" y="1124.0" width="504" height="1.2" fill="#e6e8ec"/>
<text x="162.8" y="1129.8" font-family="Liberation Mono" font-size="18" font-weight="400" fill="#566176" stroke="#566176" stroke-width="0.4" text-anchor="end" letter-spacing="-0.6" >0%</text>
<rect x="200.0" y="1125" width="1.2" height="8" fill="#dcdfe4"/>
<text x="199.8" y="1157.3" font-family="Liberation Mono" font-size="18" font-weight="400" fill="#566176" stroke="#566176" stroke-width="0.4" text-anchor="middle" letter-spacing="-0.6" >21:10</text>
<rect x="289.8" y="1125" width="1.2" height="8" fill="#dcdfe4"/>
<text x="289.6" y="1157.3" font-family="Liberation Mono" font-size="18" font-weight="400" fill="#566176" stroke="#566176" stroke-width="0.4" text-anchor="middle" letter-spacing="-0.6" >21:15</text>
<rect x="379.6" y="1125" width="1.2" height="8" fill="#dcdfe4"/>
<text x="379.4" y="1157.3" font-family="Liberation Mono" font-size="18" font-weight="400" fill="#566176" stroke="#566176" stroke-width="0.4" text-anchor="middle" letter-spacing="-0.6" >21:20</text>
<rect x="469.4" y="1125" width="1.2" height="8" fill="#dcdfe4"/>
<text x="469.2" y="1157.3" font-family="Liberation Mono" font-size="18" font-weight="400" fill="#566176" stroke="#566176" stroke-width="0.4" text-anchor="middle" letter-spacing="-0.6" >21:25</text>
<rect x="559.2" y="1125" width="1.2" height="8" fill="#dcdfe4"/>
<text x="559.0" y="1157.3" font-family="Liberation Mono" font-size="18" font-weight="400" fill="#566176" stroke="#566176" stroke-width="0.4" text-anchor="middle" letter-spacing="-0.6" >21:30</text>
<rect x="649.0" y="1125" width="1.2" height="8" fill="#dcdfe4"/>
<text x="648.8" y="1157.3" font-family="Liberation Mono" font-size="18" font-weight="400" fill="#566176" stroke="#566176" stroke-width="0.4" text-anchor="middle" letter-spacing="-0.6" >21:35</text>
<polyline points="182.6,799.5 200.6,803.1 218.5,800.7 236.5,799.5 254.4,799.5 272.4,799.9 290.4,799.5 308.3,799.9 326.3,799.9 344.2,823.6 362.2,800.7 380.2,799.5 398.1,799.5 416.1,799.5 434.0,800.3 452.0,799.5 470.0,799.5 487.9,806.3 505.9,806.3 523.8,799.9 541.8,799.5 559.8,800.3 577.7,799.5 595.7,800.3 613.6,799.5 631.6,810.8 649.6,807.6 667.5,799.5 685.5,799.5" fill="none" stroke="#d846e8" stroke-width="2.2" stroke-linejoin="round"/>
<circle cx="182.6" cy="799.5" r="1.8" fill="#d846e8"/>
<circle cx="200.6" cy="803.1" r="1.8" fill="#d846e8"/>
<circle cx="218.5" cy="800.7" r="1.8" fill="#d846e8"/>
<circle cx="236.5" cy="799.5" r="1.8" fill="#d846e8"/>
<circle cx="254.4" cy="799.5" r="1.8" fill="#d846e8"/>
<circle cx="272.4" cy="799.9" r="1.8" fill="#d846e8"/>
<circle cx="290.4" cy="799.5" r="1.8" fill="#d846e8"/>
<circle cx="308.3" cy="799.9" r="1.8" fill="#d846e8"/>
<circle cx="326.3" cy="799.9" r="1.8" fill="#d846e8"/>
<circle cx="344.2" cy="823.6" r="1.8" fill="#d846e8"/>
<circle cx="362.2" cy="800.7" r="1.8" fill="#d846e8"/>
<circle cx="380.2" cy="799.5" r="1.8" fill="#d846e8"/>
<circle cx="398.1" cy="799.5" r="1.8" fill="#d846e8"/>
<circle cx="416.1" cy="799.5" r="1.8" fill="#d846e8"/>
<circle cx="434.0" cy="800.3" r="1.8" fill="#d846e8"/>
<circle cx="452.0" cy="799.5" r="1.8" fill="#d846e8"/>
<circle cx="470.0" cy="799.5" r="1.8" fill="#d846e8"/>
<circle cx="487.9" cy="806.3" r="1.8" fill="#d846e8"/>
<circle cx="505.9" cy="806.3" r="1.8" fill="#d846e8"/>
<circle cx="523.8" cy="799.9" r="1.8" fill="#d846e8"/>
<circle cx="541.8" cy="799.5" r="1.8" fill="#d846e8"/>
<circle cx="559.8" cy="800.3" r="1.8" fill="#d846e8"/>
<circle cx="577.7" cy="799.5" r="1.8" fill="#d846e8"/>
<circle cx="595.7" cy="800.3" r="1.8" fill="#d846e8"/>
<circle cx="613.6" cy="799.5" r="1.8" fill="#d846e8"/>
<circle cx="631.6" cy="810.8" r="1.8" fill="#d846e8"/>
<circle cx="649.6" cy="807.6" r="1.8" fill="#d846e8"/>
<circle cx="667.5" cy="799.5" r="1.8" fill="#d846e8"/>
<circle cx="685.5" cy="799.5" r="1.8" fill="#d846e8"/>
<text x="750.3" y="763.3" font-family="Liberation Sans" font-size="19" font-weight="400" fill="#4d596d" stroke="#4d596d" stroke-width="0.25" textLength="219" lengthAdjust="spacingAndGlyphs">Throughput &amp; Error Rate</text>
<g transform="translate(1280 748.5)" fill="none" stroke="#4b5567" stroke-width="1.6" stroke-linecap="round" stroke-linejoin="round"><path d="M4.2 13.5 V8.3 A4.8 4.8 0 0 1 13.8 8.3 V13.5 L15.2 15 H2.8 Z"/><path d="M9 1 V2.6"/><path d="M7.6 17.2 H10.4"/><path d="M1.4 7.2 A8 8 0 0 1 3.6 2.6"/><path d="M16.6 7.2 A8 8 0 0 0 14.4 2.6"/></g>
<g transform="translate(1318.5 750)" fill="none" stroke="#4b5567" stroke-width="1.9" stroke-linecap="round"><path d="M9.5 1 H14 V5.5"/><path d="M1 8.5 V13 H5.5"/></g>
<rect x="855.5" y="809.2" width="456.5" height="1.2" fill="#e6e8ec"/>
<rect x="855.5" y="822.1" width="456.5" height="1.2" fill="#e6e8ec"/>
<rect x="855.5" y="898.2" width="456.5" height="1.2" fill="#e6e8ec"/>
<rect x="855.5" y="974.3" width="456.5" height="1.2" fill="#e6e8ec"/>
<rect x="855.5" y="1050.3" width="456.5" height="1.2" fill="#e6e8ec"/>
<rect x="855.5" y="1126.2" width="472.5" height="1.2" fill="#e6e8ec"/>
<text x="836.3" y="827.7" font-family="Liberation Mono" font-size="18" font-weight="400" fill="#566176" stroke="#566176" stroke-width="0.4" text-anchor="end" letter-spacing="-0.4" >4000 rpm</text>
<text x="836.3" y="903.8" font-family="Liberation Mono" font-size="18" font-weight="400" fill="#566176" stroke="#566176" stroke-width="0.4" text-anchor="end" letter-spacing="-0.4" >3000 rpm</text>
<text x="836.3" y="979.9" font-family="Liberation Mono" font-size="18" font-weight="400" fill="#566176" stroke="#566176" stroke-width="0.4" text-anchor="end" letter-spacing="-0.4" >2000 rpm</text>
<text x="836.3" y="1055.9" font-family="Liberation Mono" font-size="18" font-weight="400" fill="#566176" stroke="#566176" stroke-width="0.4" text-anchor="end" letter-spacing="-0.4" >1000 rpm</text>
<text x="836.3" y="1132.0" font-family="Liberation Mono" font-size="18" font-weight="400" fill="#566176" stroke="#566176" stroke-width="0.4" text-anchor="end" letter-spacing="-0.4" >0 rpm</text>
<rect x="855.3" y="944.5" width="11" height="182.5" fill="#12b880"/>
<rect x="855.3" y="944.5" width="11" height="6.2" fill="#e8395a"/>
<rect x="855.3" y="950.7" width="11" height="8.2" fill="#14a3e6"/>
<rect x="855.3" y="958.9" width="11" height="0.8" fill="#7fd8c8"/>
<rect x="871.2" y="1004.8" width="11" height="122.2" fill="#12b880"/>
<rect x="871.2" y="1004.8" width="11" height="6.2" fill="#e8395a"/>
<rect x="871.2" y="1011.0" width="11" height="5.5" fill="#14a3e6"/>
<rect x="871.2" y="1016.5" width="11" height="0.8" fill="#7fd8c8"/>
<rect x="887.2" y="981.0" width="11" height="146.0" fill="#12b880"/>
<rect x="887.2" y="981.0" width="11" height="6.2" fill="#e8395a"/>
<rect x="887.2" y="987.2" width="11" height="6.6" fill="#14a3e6"/>
<rect x="887.2" y="993.8" width="11" height="0.8" fill="#7fd8c8"/>
<rect x="903.1" y="927.0" width="11" height="200.0" fill="#12b880"/>
<rect x="903.1" y="927.0" width="11" height="6.2" fill="#e8395a"/>
<rect x="903.1" y="933.2" width="11" height="9.0" fill="#14a3e6"/>
<rect x="903.1" y="942.2" width="11" height="0.8" fill="#7fd8c8"/>
<rect x="919.1" y="935.8" width="11" height="191.2" fill="#12b880"/>
<rect x="919.1" y="935.8" width="11" height="6.2" fill="#e8395a"/>
<rect x="919.1" y="942.0" width="11" height="8.6" fill="#14a3e6"/>
<rect x="919.1" y="950.6" width="11" height="0.8" fill="#7fd8c8"/>
<rect x="935.0" y="946.0" width="11" height="181.0" fill="#12b880"/>
<rect x="935.0" y="946.0" width="11" height="6.2" fill="#e8395a"/>
<rect x="935.0" y="952.2" width="11" height="8.1" fill="#14a3e6"/>
<rect x="935.0" y="960.3" width="11" height="0.8" fill="#7fd8c8"/>
<rect x="950.9" y="935.4" width="11" height="191.6" fill="#12b880"/>
<rect x="950.9" y="935.4" width="11" height="6.2" fill="#e8395a"/>
<rect x="950.9" y="941.6" width="11" height="8.6" fill="#14a3e6"/>
<rect x="950.9" y="950.2" width="11" height="0.8" fill="#7fd8c8"/>
<rect x="966.9" y="937.0" width="11" height="190.0" fill="#12b880"/>
<rect x="966.9" y="937.0" width="11" height="6.2" fill="#e8395a"/>
<rect x="966.9" y="943.2" width="11" height="8.5" fill="#14a3e6"/>
<rect x="966.9" y="951.8" width="11" height="0.8" fill="#7fd8c8"/>
<rect x="982.8" y="940.6" width="11" height="186.4" fill="#12b880"/>
<rect x="982.8" y="940.6" width="11" height="6.2" fill="#e8395a"/>
<rect x="982.8" y="946.8" width="11" height="8.4" fill="#14a3e6"/>
<rect x="982.8" y="955.2" width="11" height="0.8" fill="#7fd8c8"/>
<rect x="998.8" y="1072.5" width="11" height="54.5" fill="#12b880"/>
<rect x="998.8" y="1072.5" width="11" height="6.2" fill="#e8395a"/>
<rect x="998.8" y="1078.7" width="11" height="2.5" fill="#14a3e6"/>
<rect x="998.8" y="1081.2" width="11" height="0.8" fill="#7fd8c8"/>
<rect x="1014.7" y="991.4" width="11" height="135.6" fill="#12b880"/>
<rect x="1014.7" y="991.4" width="11" height="6.2" fill="#e8395a"/>
<rect x="1014.7" y="997.6" width="11" height="6.1" fill="#14a3e6"/>
<rect x="1014.7" y="1003.7" width="11" height="0.8" fill="#7fd8c8"/>
<rect x="1030.6" y="937.6" width="11" height="189.4" fill="#12b880"/>
<rect x="1030.6" y="937.6" width="11" height="6.2" fill="#e8395a"/>
<rect x="1030.6" y="943.8" width="11" height="8.5" fill="#14a3e6"/>
<rect x="1030.6" y="952.3" width="11" height="0.8" fill="#7fd8c8"/>
<rect x="1046.6" y="932.8" width="11" height="194.2" fill="#12b880"/>
<rect x="1046.6" y="932.8" width="11" height="6.2" fill="#e8395a"/>
<rect x="1046.6" y="939.0" width="11" height="8.7" fill="#14a3e6"/>
<rect x="1046.6" y="947.7" width="11" height="0.8" fill="#7fd8c8"/>
<rect x="1062.5" y="938.0" width="11" height="189.0" fill="#12b880"/>
<rect x="1062.5" y="938.0" width="11" height="6.2" fill="#e8395a"/>
<rect x="1062.5" y="944.2" width="11" height="8.5" fill="#14a3e6"/>
<rect x="1062.5" y="952.7" width="11" height="0.8" fill="#7fd8c8"/>
<rect x="1078.5" y="940.0" width="11" height="187.0" fill="#12b880"/>
<rect x="1078.5" y="940.0" width="11" height="6.2" fill="#e8395a"/>
<rect x="1078.5" y="946.2" width="11" height="8.4" fill="#14a3e6"/>
<rect x="1078.5" y="954.6" width="11" height="0.8" fill="#7fd8c8"/>
<rect x="1094.4" y="936.8" width="11" height="190.2" fill="#12b880"/>
<rect x="1094.4" y="936.8" width="11" height="6.2" fill="#e8395a"/>
<rect x="1094.4" y="943.0" width="11" height="8.6" fill="#14a3e6"/>
<rect x="1094.4" y="951.6" width="11" height="0.8" fill="#7fd8c8"/>
<rect x="1110.3" y="940.0" width="11" height="187.0" fill="#12b880"/>
<rect x="1110.3" y="940.0" width="11" height="6.2" fill="#e8395a"/>
<rect x="1110.3" y="946.2" width="11" height="8.4" fill="#14a3e6"/>
<rect x="1110.3" y="954.6" width="11" height="0.8" fill="#7fd8c8"/>
<rect x="1126.3" y="1006.7" width="11" height="120.3" fill="#12b880"/>
<rect x="1126.3" y="1006.7" width="11" height="6.2" fill="#e8395a"/>
<rect x="1126.3" y="1012.9" width="11" height="5.4" fill="#14a3e6"/>
<rect x="1126.3" y="1018.3" width="11" height="0.8" fill="#7fd8c8"/>
<rect x="1142.2" y="1063.7" width="11" height="63.3" fill="#12b880"/>
<rect x="1142.2" y="1063.7" width="11" height="6.2" fill="#e8395a"/>
<rect x="1142.2" y="1069.9" width="11" height="2.8" fill="#14a3e6"/>
<rect x="1142.2" y="1072.7" width="11" height="0.8" fill="#7fd8c8"/>
<rect x="1158.2" y="944.0" width="11" height="183.0" fill="#12b880"/>
<rect x="1158.2" y="944.0" width="11" height="6.2" fill="#e8395a"/>
<rect x="1158.2" y="950.2" width="11" height="8.2" fill="#14a3e6"/>
<rect x="1158.2" y="958.4" width="11" height="0.8" fill="#7fd8c8"/>
<rect x="1174.1" y="930.0" width="11" height="197.0" fill="#12b880"/>
<rect x="1174.1" y="930.0" width="11" height="6.2" fill="#e8395a"/>
<rect x="1174.1" y="936.2" width="11" height="8.9" fill="#14a3e6"/>
<rect x="1174.1" y="945.1" width="11" height="0.8" fill="#7fd8c8"/>
<rect x="1190.0" y="946.8" width="11" height="180.2" fill="#12b880"/>
<rect x="1190.0" y="946.8" width="11" height="6.2" fill="#e8395a"/>
<rect x="1190.0" y="953.0" width="11" height="8.1" fill="#14a3e6"/>
<rect x="1190.0" y="961.1" width="11" height="0.8" fill="#7fd8c8"/>
<rect x="1206.0" y="934.8" width="11" height="192.2" fill="#12b880"/>
<rect x="1206.0" y="934.8" width="11" height="6.2" fill="#e8395a"/>
<rect x="1206.0" y="941.0" width="11" height="8.6" fill="#14a3e6"/>
<rect x="1206.0" y="949.6" width="11" height="0.8" fill="#7fd8c8"/>
<rect x="1221.9" y="940.8" width="11" height="186.2" fill="#12b880"/>
<rect x="1221.9" y="940.8" width="11" height="6.2" fill="#e8395a"/>
<rect x="1221.9" y="947.0" width="11" height="8.4" fill="#14a3e6"/>
<rect x="1221.9" y="955.4" width="11" height="0.8" fill="#7fd8c8"/>
<rect x="1237.9" y="934.8" width="11" height="192.2" fill="#12b880"/>
<rect x="1237.9" y="934.8" width="11" height="6.2" fill="#e8395a"/>
<rect x="1237.9" y="941.0" width="11" height="8.6" fill="#14a3e6"/>
<rect x="1237.9" y="949.6" width="11" height="0.8" fill="#7fd8c8"/>
<rect x="1253.8" y="1011.9" width="11" height="115.1" fill="#12b880"/>
<rect x="1253.8" y="1011.9" width="11" height="6.2" fill="#e8395a"/>
<rect x="1253.8" y="1018.1" width="11" height="5.2" fill="#14a3e6"/>
<rect x="1253.8" y="1023.3" width="11" height="0.8" fill="#7fd8c8"/>
<rect x="1269.7" y="1069.3" width="11" height="57.7" fill="#12b880"/>
<rect x="1269.7" y="1069.3" width="11" height="6.2" fill="#e8395a"/>
<rect x="1269.7" y="1075.5" width="11" height="2.6" fill="#14a3e6"/>
<rect x="1269.7" y="1078.1" width="11" height="0.8" fill="#7fd8c8"/>
<rect x="1285.7" y="931.6" width="11" height="195.4" fill="#12b880"/>
<rect x="1285.7" y="931.6" width="11" height="6.2" fill="#e8395a"/>
<rect x="1285.7" y="937.8" width="11" height="8.8" fill="#14a3e6"/>
<rect x="1285.7" y="946.6" width="11" height="0.8" fill="#7fd8c8"/>
<rect x="1301.6" y="938.4" width="11" height="188.6" fill="#12b880"/>
<rect x="1301.6" y="938.4" width="11" height="6.2" fill="#e8395a"/>
<rect x="1301.6" y="944.6" width="11" height="8.5" fill="#14a3e6"/>
<rect x="1301.6" y="953.1" width="11" height="0.8" fill="#7fd8c8"/>
<rect x="1317.6" y="944.4" width="11" height="182.6" fill="#12b880"/>
<rect x="1317.6" y="944.4" width="11" height="6.2" fill="#e8395a"/>
<rect x="1317.6" y="950.6" width="11" height="8.2" fill="#14a3e6"/>
<rect x="1317.6" y="958.8" width="11" height="0.8" fill="#7fd8c8"/>
<rect x="876.1" y="1127.5" width="1.2" height="8" fill="#dcdfe4"/>
<text x="875.9" y="1160.3" font-family="Liberation Mono" font-size="18" font-weight="400" fill="#566176" stroke="#566176" stroke-width="0.4" text-anchor="middle" letter-spacing="-0.6" >21:10</text>
<rect x="955.8" y="1127.5" width="1.2" height="8" fill="#dcdfe4"/>
<text x="955.6" y="1160.3" font-family="Liberation Mono" font-size="18" font-weight="400" fill="#566176" stroke="#566176" stroke-width="0.4" text-anchor="middle" letter-spacing="-0.6" >21:15</text>
<rect x="1035.5" y="1127.5" width="1.2" height="8" fill="#dcdfe4"/>
<text x="1035.3" y="1160.3" font-family="Liberation Mono" font-size="18" font-weight="400" fill="#566176" stroke="#566176" stroke-width="0.4" text-anchor="middle" letter-spacing="-0.6" >21:20</text>
<rect x="1115.2" y="1127.5" width="1.2" height="8" fill="#dcdfe4"/>
<text x="1115.0" y="1160.3" font-family="Liberation Mono" font-size="18" font-weight="400" fill="#566176" stroke="#566176" stroke-width="0.4" text-anchor="middle" letter-spacing="-0.6" >21:25</text>
<rect x="1194.9" y="1127.5" width="1.2" height="8" fill="#dcdfe4"/>
<text x="1194.7" y="1160.3" font-family="Liberation Mono" font-size="18" font-weight="400" fill="#566176" stroke="#566176" stroke-width="0.4" text-anchor="middle" letter-spacing="-0.6" >21:30</text>
<rect x="1274.6" y="1127.5" width="1.2" height="8" fill="#dcdfe4"/>
<text x="1274.4" y="1160.3" font-family="Liberation Mono" font-size="18" font-weight="400" fill="#566176" stroke="#566176" stroke-width="0.4" text-anchor="middle" letter-spacing="-0.6" >21:35</text>
<line x1="855.5" y1="838" x2="1306" y2="838" stroke="#e8385a" stroke-width="3" stroke-dasharray="12.5 6.5"/>
<rect x="777.5" y="828" width="70" height="21" rx="10.5" fill="#e8385a"/>
<text x="812.5" y="843.5" font-family="Liberation Sans" font-size="14.5" font-weight="700" fill="#ffffff" text-anchor="middle" >3800</text>
<text x="1377" y="765.8" font-family="Liberation Sans" font-size="19" font-weight="400" fill="#4d596d" stroke="#4d596d" stroke-width="0.25" textLength="154" lengthAdjust="spacingAndGlyphs">Error Distribution</text>
<rect x="1551" y="775" width="113.5" height="1.3" fill="#e5e7eb"/>
<rect x="1551" y="773" width="44" height="3.2" fill="#3b4a5e"/>
<text x="1573.3" y="766.5" font-family="Liberation Sans" font-size="19.4" font-weight="400" fill="#3b4859" stroke="#3b4859" stroke-width="0.45" text-anchor="middle" >%</text>
<text x="1609.8" y="766.5" font-family="Liberation Sans" font-size="19.4" font-weight="400" fill="#94a3b8" stroke="#94a3b8" stroke-width="0.5" textLength="40.4" lengthAdjust="spacing">RPM</text>
<rect x="1677" y="747" width="45.7" height="24.6" rx="6" fill="#f59e0b"/>
<text x="1699.8" y="765.2" font-family="Liberation Sans" font-size="16.2" fill="#fff" text-anchor="middle">4XX</text>
<rect x="1729.6" y="747" width="44.6" height="24.6" rx="6" fill="#ef4444"/>
<text x="1751.9" y="765.2" font-family="Liberation Sans" font-size="16.2" fill="#fff" text-anchor="middle">5XX</text>
<g transform="translate(1906.5 750.5)" fill="none" stroke="#4b5567" stroke-width="1.6" stroke-linecap="round" stroke-linejoin="round"><path d="M1 1.8 L16.1 16.8"/><path d="M4.7 6.2 V14.3"/><path d="M3 14.3 H12.4"/><path d="M7.1 3.6 A 6.9 6.9 0 0 1 14.1 10.3"/><path d="M9.25 0.8 V3"/><path d="M8.3 16.8 H10.2"/></g>
<g transform="translate(1945 752)" fill="none" stroke="#4b5567" stroke-width="1.9" stroke-linecap="round"><path d="M9.5 1 H14 V5.5"/><path d="M1 8.5 V13 H5.5"/></g>
<rect x="1416" y="809.4" width="524" height="1.2" fill="#e6e8ec"/>
<rect x="1416" y="887.8" width="524" height="1.2" fill="#e6e8ec"/>
<rect x="1416" y="966.1" width="524" height="1.2" fill="#e6e8ec"/>
<rect x="1416" y="1044.5" width="524" height="1.2" fill="#e6e8ec"/>
<text x="1396" y="815.0" font-family="Liberation Mono" font-size="18" font-weight="400" fill="#566176" stroke="#566176" stroke-width="0.4" text-anchor="end" letter-spacing="-0.6" >8%</text>
<text x="1396" y="893.4" font-family="Liberation Mono" font-size="18" font-weight="400" fill="#566176" stroke="#566176" stroke-width="0.4" text-anchor="end" letter-spacing="-0.6" >6%</text>
<text x="1396" y="971.7" font-family="Liberation Mono" font-size="18" font-weight="400" fill="#566176" stroke="#566176" stroke-width="0.4" text-anchor="end" letter-spacing="-0.6" >4%</text>
<text x="1396" y="1050.1" font-family="Liberation Mono" font-size="18" font-weight="400" fill="#566176" stroke="#566176" stroke-width="0.4" text-anchor="end" letter-spacing="-0.6" >2%</text>
<text x="1396" y="1128.5" font-family="Liberation Mono" font-size="18" font-weight="400" fill="#566176" stroke="#566176" stroke-width="0.4" text-anchor="end" letter-spacing="-0.6" >0%</text>
<rect x="1434.8" y="1124" width="1.2" height="9" fill="#dcdfe4"/>
<text x="1434.6" y="1157.3" font-family="Liberation Mono" font-size="18" font-weight="400" fill="#566176" stroke="#566176" stroke-width="0.4" text-anchor="middle" letter-spacing="-0.6" >21:10</text>
<rect x="1528.2" y="1124" width="1.2" height="9" fill="#dcdfe4"/>
<text x="1528.0" y="1157.3" font-family="Liberation Mono" font-size="18" font-weight="400" fill="#566176" stroke="#566176" stroke-width="0.4" text-anchor="middle" letter-spacing="-0.6" >21:15</text>
<rect x="1621.5" y="1124" width="1.2" height="9" fill="#dcdfe4"/>
<text x="1621.3" y="1157.3" font-family="Liberation Mono" font-size="18" font-weight="400" fill="#566176" stroke="#566176" stroke-width="0.4" text-anchor="middle" letter-spacing="-0.6" >21:20</text>
<rect x="1714.9" y="1124" width="1.2" height="9" fill="#dcdfe4"/>
<text x="1714.7" y="1157.3" font-family="Liberation Mono" font-size="18" font-weight="400" fill="#566176" stroke="#566176" stroke-width="0.4" text-anchor="middle" letter-spacing="-0.6" >21:25</text>
<rect x="1808.2" y="1124" width="1.2" height="9" fill="#dcdfe4"/>
<text x="1808.0" y="1157.3" font-family="Liberation Mono" font-size="18" font-weight="400" fill="#566176" stroke="#566176" stroke-width="0.4" text-anchor="middle" letter-spacing="-0.6" >21:30</text>
<rect x="1901.6" y="1124" width="1.2" height="9" fill="#dcdfe4"/>
<text x="1901.4" y="1157.3" font-family="Liberation Mono" font-size="18" font-weight="400" fill="#566176" stroke="#566176" stroke-width="0.4" text-anchor="middle" letter-spacing="-0.6" >21:35</text>
<polyline points="1416.7,1123.5 1435.4,1123.5 1454.0,1123.5 1472.7,1123.5 1491.4,1123.5 1510.0,1123.5 1528.7,1123.5 1547.4,1123.5 1566.1,1123.5 1584.7,1123.5 1603.4,1123.5 1622.1,1123.5 1640.7,1123.5 1659.4,1123.5 1678.1,1123.5 1696.8,1123.5 1715.4,1123.5 1734.1,1123.5 1752.8,1123.5 1771.4,1123.5 1790.1,1123.5 1808.8,1123.5 1827.4,1123.5 1846.1,1123.5 1864.8,1123.5 1883.5,1123.5 1902.1,1123.5 1920.8,1123.5 1939.5,1123.5" fill="none" stroke="#f0a020" stroke-width="2.6" stroke-linejoin="round"/>
<circle cx="1416.7" cy="1123.5" r="2" fill="#f0a020"/>
<circle cx="1435.4" cy="1123.5" r="2" fill="#f0a020"/>
<circle cx="1454.0" cy="1123.5" r="2" fill="#f0a020"/>
<circle cx="1472.7" cy="1123.5" r="2" fill="#f0a020"/>
<circle cx="1491.4" cy="1123.5" r="2" fill="#f0a020"/>
<circle cx="1510.0" cy="1123.5" r="2" fill="#f0a020"/>
<circle cx="1528.7" cy="1123.5" r="2" fill="#f0a020"/>
<circle cx="1547.4" cy="1123.5" r="2" fill="#f0a020"/>
<circle cx="1566.1" cy="1123.5" r="2" fill="#f0a020"/>
<circle cx="1584.7" cy="1123.5" r="2" fill="#f0a020"/>
<circle cx="1603.4" cy="1123.5" r="2" fill="#f0a020"/>
<circle cx="1622.1" cy="1123.5" r="2" fill="#f0a020"/>
<circle cx="1640.7" cy="1123.5" r="2" fill="#f0a020"/>
<circle cx="1659.4" cy="1123.5" r="2" fill="#f0a020"/>
<circle cx="1678.1" cy="1123.5" r="2" fill="#f0a020"/>
<circle cx="1696.8" cy="1123.5" r="2" fill="#f0a020"/>
<circle cx="1715.4" cy="1123.5" r="2" fill="#f0a020"/>
<circle cx="1734.1" cy="1123.5" r="2" fill="#f0a020"/>
<circle cx="1752.8" cy="1123.5" r="2" fill="#f0a020"/>
<circle cx="1771.4" cy="1123.5" r="2" fill="#f0a020"/>
<circle cx="1790.1" cy="1123.5" r="2" fill="#f0a020"/>
<circle cx="1808.8" cy="1123.5" r="2" fill="#f0a020"/>
<circle cx="1827.4" cy="1123.5" r="2" fill="#f0a020"/>
<circle cx="1846.1" cy="1123.5" r="2" fill="#f0a020"/>
<circle cx="1864.8" cy="1123.5" r="2" fill="#f0a020"/>
<circle cx="1883.5" cy="1123.5" r="2" fill="#f0a020"/>
<circle cx="1902.1" cy="1123.5" r="2" fill="#f0a020"/>
<circle cx="1920.8" cy="1123.5" r="2" fill="#f0a020"/>
<circle cx="1939.5" cy="1123.5" r="2" fill="#f0a020"/>
<polyline points="1416.7,1104.2 1435.4,1065.3 1454.0,1092.6 1472.7,1104.2 1491.4,1106.2 1510.0,1100.2 1528.7,1106.2 1547.4,1101.4 1566.1,1102.2 1584.7,814.3 1603.4,1092.6 1622.1,1103.4 1640.7,1105.4 1659.4,1103.4 1678.1,1096.6 1696.8,1101.4 1715.4,1104.2 1734.1,1019.1 1752.8,1022.3 1771.4,1100.6 1790.1,1105.4 1808.8,1098.6 1827.4,1108.2 1846.1,1099.4 1864.8,1106.2 1883.5,970.9 1902.1,1006.3 1920.8,1106.6 1939.5,1105.4" fill="none" stroke="#e0393e" stroke-width="2.2" stroke-linejoin="round"/>
<circle cx="1416.7" cy="1104.2" r="1.8" fill="#e0393e"/>
<circle cx="1435.4" cy="1065.3" r="1.8" fill="#e0393e"/>
<circle cx="1454.0" cy="1092.6" r="1.8" fill="#e0393e"/>
<circle cx="1472.7" cy="1104.2" r="1.8" fill="#e0393e"/>
<circle cx="1491.4" cy="1106.2" r="1.8" fill="#e0393e"/>
<circle cx="1510.0" cy="1100.2" r="1.8" fill="#e0393e"/>
<circle cx="1528.7" cy="1106.2" r="1.8" fill="#e0393e"/>
<circle cx="1547.4" cy="1101.4" r="1.8" fill="#e0393e"/>
<circle cx="1566.1" cy="1102.2" r="1.8" fill="#e0393e"/>
<circle cx="1584.7" cy="814.3" r="1.8" fill="#e0393e"/>
<circle cx="1603.4" cy="1092.6" r="1.8" fill="#e0393e"/>
<circle cx="1622.1" cy="1103.4" r="1.8" fill="#e0393e"/>
<circle cx="1640.7" cy="1105.4" r="1.8" fill="#e0393e"/>
<circle cx="1659.4" cy="1103.4" r="1.8" fill="#e0393e"/>
<circle cx="1678.1" cy="1096.6" r="1.8" fill="#e0393e"/>
<circle cx="1696.8" cy="1101.4" r="1.8" fill="#e0393e"/>
<circle cx="1715.4" cy="1104.2" r="1.8" fill="#e0393e"/>
<circle cx="1734.1" cy="1019.1" r="1.8" fill="#e0393e"/>
<circle cx="1752.8" cy="1022.3" r="1.8" fill="#e0393e"/>
<circle cx="1771.4" cy="1100.6" r="1.8" fill="#e0393e"/>
<circle cx="1790.1" cy="1105.4" r="1.8" fill="#e0393e"/>
<circle cx="1808.8" cy="1098.6" r="1.8" fill="#e0393e"/>
<circle cx="1827.4" cy="1108.2" r="1.8" fill="#e0393e"/>
<circle cx="1846.1" cy="1099.4" r="1.8" fill="#e0393e"/>
<circle cx="1864.8" cy="1106.2" r="1.8" fill="#e0393e"/>
<circle cx="1883.5" cy="970.9" r="1.8" fill="#e0393e"/>
<circle cx="1902.1" cy="1006.3" r="1.8" fill="#e0393e"/>
<circle cx="1920.8" cy="1106.6" r="1.8" fill="#e0393e"/>
<circle cx="1939.5" cy="1105.4" r="1.8" fill="#e0393e"/>
</svg>
</body></html>
